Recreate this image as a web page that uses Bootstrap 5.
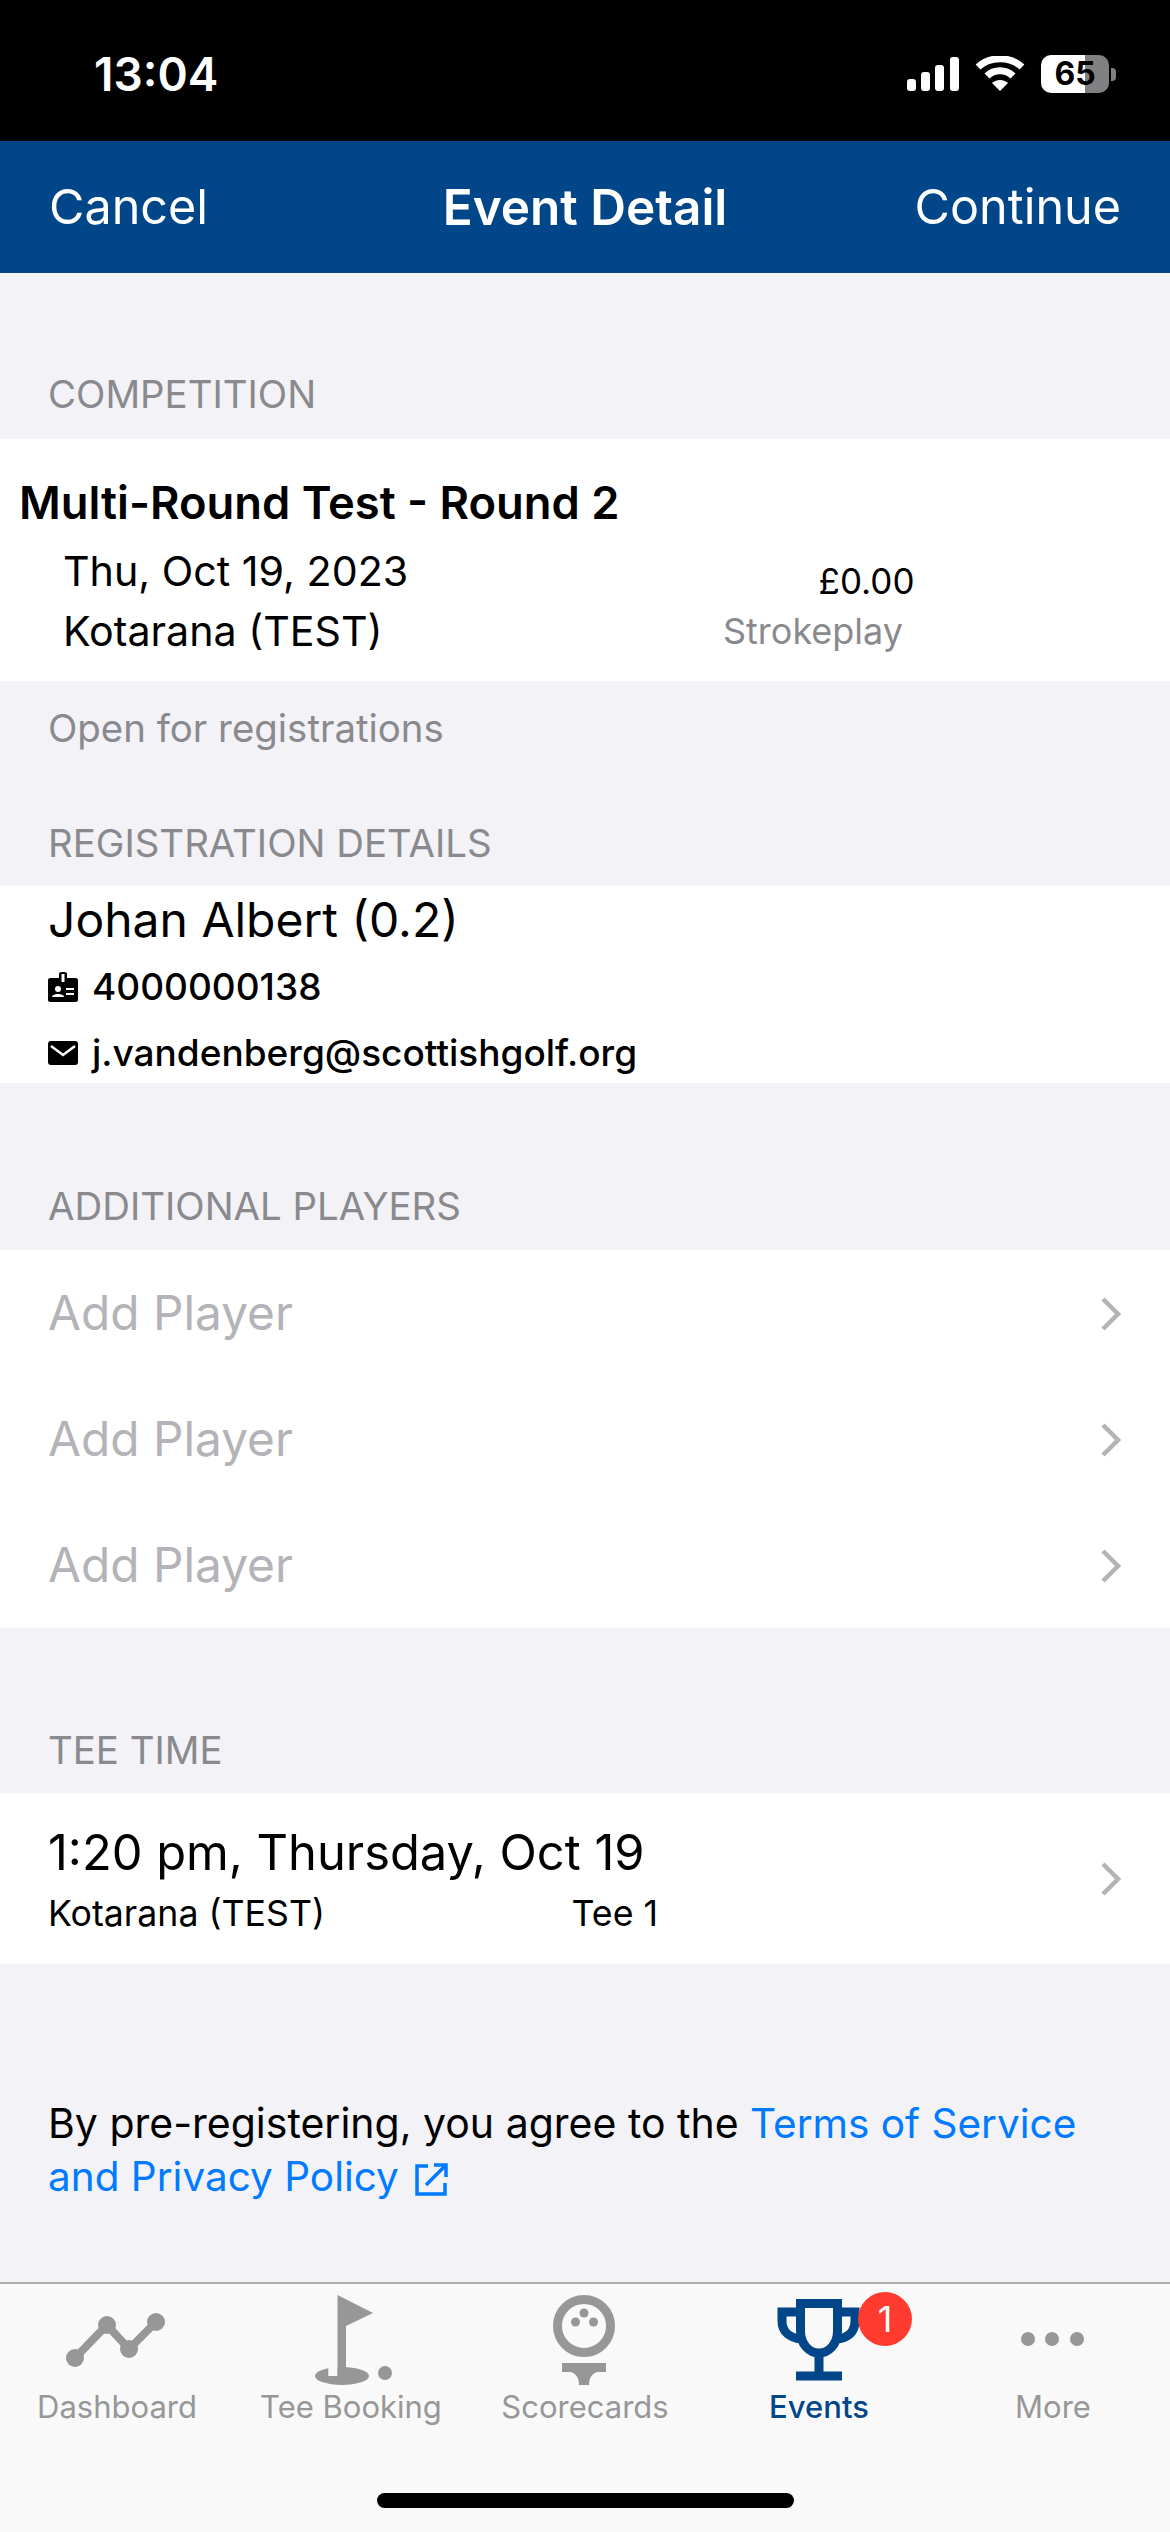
<!DOCTYPE html>
<html lang="en">

<head>
  <meta charset="UTF-8">
  <meta name="viewport" content="width=device-width, initial-scale=1.0">
  <title>Event Detail</title>
  <link href="https://cdn.jsdelivr.net/npm/bootstrap@5.3.2/dist/css/bootstrap.min.css" rel="stylesheet">
  <style>
    body {
      width: 1170px;
      height: 2532px;
      background: #f2f2f7;
      font-family: Inter, "Liberation Sans", sans-serif;
      color: #000;
      overflow: hidden;
    }

    .status-area {
      height: 141px;
      background: #000;
      color: #fff;
      padding: 7px 54px 0 94px;
    }

    .clock {
      font-size: 46px;
      font-weight: 600;
    }

    .battery-box {
      width: 68px;
      height: 38px;
      border-radius: 10px;
      background: linear-gradient(90deg, #fff 65%, #808080 65%);
      color: #000;
      font-size: 32px;
      font-weight: 700;
      line-height: 38px;
      text-align: center;
    }

    .battery-tip {
      width: 5px;
      height: 13px;
      margin-left: 2px;
      background: #808080;
      border-radius: 0 4px 4px 0;
    }

    .blue-bar {
      height: 132px;
      background: #004689;
      color: #fff;
      padding: 0 49px;
      font-size: 48.500px;
    }

    .bar-side {
      flex: 1 1 0;
    }

    .blue-bar strong {
      font-weight: 600;
      font-size: 49.500px;
    }

    .sec-label {
      color: #8a8a8e;
      font-size: 38.400px;
      padding: 0 48px;
    }

    .label-first {
      height: 166px;
      padding-top: 77px;
    }

    .label-note {
      height: 94px;
      padding-top: 1px;
    }

    .label-reg {
      height: 111px;
      padding-top: 26px;
    }

    .label-add {
      height: 167px;
      padding-top: 80px;
    }

    .label-tee {
      height: 165px;
      padding-top: 80px;
    }

    .white-block {
      background: #fff;
    }

    .comp-block {
      height: 242px;
      padding-top: 40px;
    }

    .comp-title {
      font-size: 45.300px;
      font-weight: 600;
      line-height: 48px;
      padding-left: 19px;
    }

    .comp-info {
      font-size: 41.200px;
      line-height: 60px;
      padding-left: 63px;
      margin-top: 14px;
    }

    .comp-when {
      width: 600px;
    }

    .price-col {
      width: 300px;
      text-align: center;
    }

    .price {
      font-size: 35px;
      line-height: 50px;
      padding-left: 107px;
      padding-top: 15px;
    }

    .type-name {
      font-size: 36px;
      color: #8a8a8e;
      line-height: 50px;
    }

    .reg-block {
      height: 197px;
      padding: 0 48px;
    }

    .reg-name {
      font-size: 48px;
      line-height: 68px;
    }

    .reg-line {
      font-size: 37px;
      font-weight: 500;
      line-height: 66px;
      gap: 14px;
    }

    .player-row {
      height: 126px;
      padding: 2px 48px 0;
      color: #b3b3b8;
      font-size: 47.800px;
    }

    .tee-block {
      height: 171px;
      padding: 0 48px;
    }

    .tee-when {
      font-size: 48.800px;
      line-height: 60px;
      padding-top: 8px;
    }

    .tee-place {
      font-size: 35.700px;
      line-height: 60px;
      width: 610px;
    }

    .agree-text {
      font-size: 41px;
      line-height: 52px;
      padding: 133px 48px 0;
      height: 318px;
    }

    .agree-text a {
      color: #007aff;
      font-size: 40.500px;
      text-decoration: none;
    }

    .tab-strip {
      height: 250px;
      background: #f9f9f9;
      border-top: 2px solid #adadb0;
    }

    .tab-cell {
      width: 234px;
      height: 143px;
      padding-top: 4px;
      color: #979797;
      font-size: 31px;
      line-height: 40px;
      text-align: center;
      position: relative;
    }

    .tab-cell svg {
      display: block;
      margin: 0 auto;
    }

    .tab-on {
      color: #004689;
      font-weight: 500;
    }

    .tab-count {
      position: absolute;
      left: 156px;
      top: 8px;
      width: 54px;
      height: 54px;
      border-radius: 50%;
      background: #ff3b30;
      color: #fff;
      font-size: 36px;
      font-weight: 400;
      line-height: 54px;
    }

    .home-line {
      width: 417px;
      height: 15px;
      border-radius: 8px;
      background: #000;
      margin: 66px auto 0;
    }
  </style>
</head>

<body>
  <div class="status-area d-flex align-items-center justify-content-between">
    <span class="clock">13:04</span>
    <div class="d-flex align-items-center">
      <svg width="52" height="34" viewBox="0 0 52 34" fill="#fff">
        <rect x="0" y="22" width="9" height="12" rx="3" />
        <rect x="14" y="15" width="9" height="19" rx="3" />
        <rect x="28" y="8" width="9" height="26" rx="3" />
        <rect x="43" y="0" width="9" height="34" rx="3" />
      </svg>
      <svg class="ms-3" width="50" height="36" viewBox="0 0 50 36" fill="none" stroke="#fff" stroke-width="7">
        <path d="M3 11C15 0 35 0 47 11" />
        <path d="M12 20C19 13 31 13 38 20" />
        <path d="M25 35L17 27C22 23 28 23 33 27Z" fill="#fff" stroke="none" />
      </svg>
      <div class="battery-box ms-3">65</div>
      <div class="battery-tip"></div>
    </div>
  </div>

  <div class="blue-bar d-flex align-items-center">
    <span class="bar-side">Cancel</span>
    <strong>Event Detail</strong>
    <span class="bar-side text-end">Continue</span>
  </div>

  <div class="sec-label label-first d-flex align-items-center">COMPETITION</div>
  <div class="white-block comp-block">
    <div class="comp-title">Multi-Round Test - Round 2</div>
    <div class="d-flex comp-info">
      <div class="comp-when">Thu, Oct 19, 2023<br>Kotarana (TEST)</div>
      <div class="price-col">
        <div class="price">£0.00</div>
        <div class="type-name">Strokeplay</div>
      </div>
    </div>
  </div>
  <div class="sec-label label-note d-flex align-items-center">Open for registrations</div>
  <div class="sec-label label-reg d-flex align-items-center">REGISTRATION DETAILS</div>

  <div class="white-block reg-block">
    <div class="reg-name">Johan Albert (0.2)</div>
    <div class="reg-line d-flex align-items-center">
      <svg width="30" height="30" viewBox="0 0 30 30" fill="#000">
        <path d="M2 6H11V2C11 .5 12 0 15 0S19 .5 19 2V6H28C29 6 30 7 30 8V28C30 29 29 30 28 30H2C1 30 0 29 0 28V8C0 7 1 6 2 6Z" />
        <rect x="13.500" y="2" width="3" height="8" fill="#fff" />
        <circle cx="10" cy="17" r="3" fill="#fff" />
        <path d="M4 25C4 21 16 21 16 25Z" fill="#fff" />
        <rect x="18" y="16" width="8" height="2" fill="#fff" />
        <rect x="18" y="21" width="8" height="2" fill="#fff" />
      </svg>
      <span>4000000138</span>
    </div>
    <div class="reg-line d-flex align-items-center">
      <svg width="30" height="24" viewBox="0 0 30 24">
        <rect width="30" height="24" rx="3" fill="#000" />
        <path d="M3 5L15 14L27 5" fill="none" stroke="#fff" stroke-width="2.500" />
      </svg>
      <span>j.vandenberg@scottishgolf.org</span>
    </div>
  </div>

  <div class="sec-label label-add d-flex align-items-center">ADDITIONAL PLAYERS</div>
  <div class="white-block">
    <div class="player-row d-flex align-items-center justify-content-between">
      <span>Add Player</span>
      <svg width="22" height="36" viewBox="0 0 22 36" fill="none" stroke="#b3b3b8" stroke-width="4.500"><path d="M3 3L18 18L3 33" /></svg>
    </div>
    <div class="player-row d-flex align-items-center justify-content-between">
      <span>Add Player</span>
      <svg width="22" height="36" viewBox="0 0 22 36" fill="none" stroke="#b3b3b8" stroke-width="4.500"><path d="M3 3L18 18L3 33" /></svg>
    </div>
    <div class="player-row d-flex align-items-center justify-content-between">
      <span>Add Player</span>
      <svg width="22" height="36" viewBox="0 0 22 36" fill="none" stroke="#b3b3b8" stroke-width="4.500"><path d="M3 3L18 18L3 33" /></svg>
    </div>
  </div>

  <div class="sec-label label-tee d-flex align-items-center">TEE TIME</div>
  <div class="white-block tee-block d-flex align-items-center justify-content-between">
    <div>
      <div class="tee-when">1:20 pm, Thursday, Oct 19</div>
      <div class="d-flex tee-place"><span class="flex-grow-1">Kotarana (TEST)</span><span>Tee 1</span></div>
    </div>
    <svg width="22" height="36" viewBox="0 0 22 36" fill="none" stroke="#b3b3b8" stroke-width="4.500"><path d="M3 3L18 18L3 33" /></svg>
  </div>

  <div class="agree-text">
    By pre-registering, you agree to the <a href="#">Terms of Service</a><br>
    <a href="#">and Privacy Policy
      <svg class="ms-1" width="34" height="34" viewBox="0 0 34 34" fill="none" stroke="#007aff" stroke-width="3.500"><path d="M14 3H3V31H31V20M12 22L31 3M20 2H32V14" /></svg></a>
  </div>

  <div class="tab-strip">
    <div class="d-flex">
      <div class="tab-cell">
        <svg width="234" height="99" viewBox="0 0 234 99" fill="#979797">
          <path d="M75 70L107 37L129 61L156 34" fill="none" stroke="#979797" stroke-width="8" />
          <circle cx="75" cy="70" r="9" /><circle cx="107" cy="37" r="9" /><circle cx="129" cy="61" r="9" /><circle cx="156" cy="34" r="9" />
        </svg>
        <div>Dashboard</div>
      </div>
      <div class="tab-cell">
        <svg width="234" height="99" viewBox="0 0 234 99" fill="#979797">
          <ellipse cx="108" cy="88" rx="27" ry="9" />
          <rect x="94.300" y="78" width="9.200" height="10" fill="#f9f9f9" />
          <path d="M103.500 7L139 25L112 38V88H103.500Z" />
          <circle cx="151" cy="85" r="7" />
        </svg>
        <div>Tee Booking</div>
      </div>
      <div class="tab-cell">
        <svg width="234" height="99" viewBox="0 0 234 99" fill="#979797">
          <circle cx="116" cy="38" r="26.500" fill="none" stroke="#979797" stroke-width="9" />
          <circle cx="116" cy="25" r="4.500" /><circle cx="107.500" cy="34" r="4.500" /><circle cx="125.500" cy="34" r="4.500" />
          <path d="M94 75H138V84H130C124 85 121 90 121 97H111C111 90 108 85 102 84H94Z" />
        </svg>
        <div>Scorecards</div>
      </div>
      <div class="tab-cell tab-on">
        <svg width="234" height="99" viewBox="0 0 234 99" fill="none" stroke="#004689" stroke-width="9">
          <path d="M98.500 15.500H135.500V43C135.500 56 127 65 117 65S98.500 56 98.500 43Z" />
          <path d="M98 24H80V33C80 44 88 50 99 51M136 24H153V33C153 44 146 50 135 51" />
          <path d="M117 65V88M94 88H140" />
        </svg>
        <div>Events</div>
        <span class="tab-count">1</span>
      </div>
      <div class="tab-cell">
        <svg width="234" height="99" viewBox="0 0 234 99" fill="#979797">
          <circle cx="92" cy="51" r="7" /><circle cx="116" cy="51" r="7" /><circle cx="141" cy="51" r="7" />
        </svg>
        <div>More</div>
      </div>
    </div>
    <div class="home-line"></div>
  </div>

  <script src="https://cdn.jsdelivr.net/npm/bootstrap@5.3.2/dist/js/bootstrap.bundle.min.js"></script>
</body>

</html>
